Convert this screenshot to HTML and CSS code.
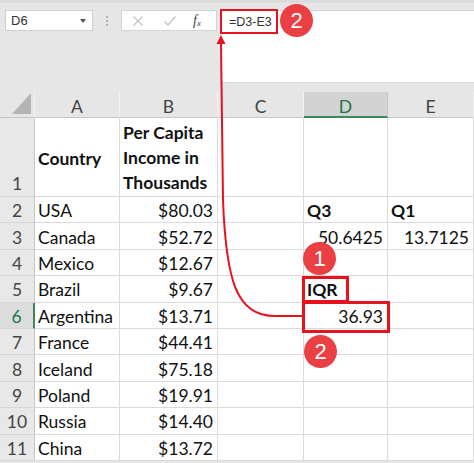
FILE: index.html
```html
<!DOCTYPE html>
<html>
<head>
<meta charset="utf-8">
<link rel="stylesheet" href="styles.css">
</head>
<body>
<div class="app">
  <div class="toolbar">
    <div class="namebox"><span class="ref">D6</span><span class="caret"></span></div>
    <div class="dots"><i></i><i></i><i></i></div>
    <div class="fbtns">
      <svg class="ico" width="12" height="12" viewBox="0 0 12 12"><path d="M1.5 1.5 L10.5 10.5 M10.5 1.5 L1.5 10.5" stroke="#c4c4c4" stroke-width="1.3" fill="none"/></svg>
      <svg class="ico" width="14" height="12" viewBox="0 0 14 12"><path d="M1.5 6.5 L5 10 L12.5 1.5" stroke="#c4c4c4" stroke-width="1.3" fill="none"/></svg>
      <span class="fx">f<sub>x</sub></span>
    </div>
    <div class="formula"><span class="ftext">=D3-E3</span></div>
  </div>

  <div class="sheet">
    <div class="corner"><span class="tri"></span></div>
    <div class="ch">A</div><div class="ch">B</div><div class="ch">C</div><div class="ch sel">D</div><div class="ch">E</div>

    <div class="rh bottom">1</div>
    <div class="c b mid">Country</div>
    <div class="c b wrap">Per Capita Income in Thousands</div>
    <div class="c"></div><div class="c"></div><div class="c"></div>

    <div class="rh">2</div><div class="c">USA</div><div class="c r">$80.03</div><div class="c"></div><div class="c b">Q3</div><div class="c b">Q1</div>
    <div class="rh">3</div><div class="c">Canada</div><div class="c r">$52.72</div><div class="c"></div><div class="c r">50.6425</div><div class="c r">13.7125</div>
    <div class="rh">4</div><div class="c">Mexico</div><div class="c r">$12.67</div><div class="c"></div><div class="c"></div><div class="c"></div>
    <div class="rh">5</div><div class="c">Brazil</div><div class="c r">$9.67</div><div class="c"></div><div class="c b">IQR</div><div class="c"></div>
    <div class="rh rsel">6</div><div class="c">Argentina</div><div class="c r">$13.71</div><div class="c"></div><div class="c r">36.93</div><div class="c"></div>
    <div class="rh">7</div><div class="c">France</div><div class="c r">$44.41</div><div class="c"></div><div class="c"></div><div class="c"></div>
    <div class="rh">8</div><div class="c">Iceland</div><div class="c r">$75.18</div><div class="c"></div><div class="c"></div><div class="c"></div>
    <div class="rh">9</div><div class="c">Poland</div><div class="c r">$19.91</div><div class="c"></div><div class="c"></div><div class="c"></div>
    <div class="rh">10</div><div class="c">Russia</div><div class="c r">$14.40</div><div class="c"></div><div class="c"></div><div class="c"></div>
    <div class="rh">11</div><div class="c">China</div><div class="c r">$13.72</div><div class="c"></div><div class="c"></div><div class="c"></div>
  </div>

  <svg class="arrow" width="474" height="463" viewBox="0 0 474 463">
    <path d="M302 316 L275 316 C236 316 226 280 223 200 L221 43" stroke="#e8121c" stroke-width="2" fill="none"/>
    <polygon points="221,35 216.5,44 225.5,44" fill="#e8121c"/>
  </svg>
  <div class="hl hl-formula"></div>
  <div class="hl hl-iqr"></div>
  <div class="hl hl-d6"></div>
  <div class="badge badge-top">2</div>
  <div class="badge badge-one">1</div>
  <div class="badge badge-two">2</div>
</div>
</body>
</html>
```
FILE: styles.css
```css
html, body {
  margin: 0;
  padding: 0;
  background: #e6e6e6;
}
.app {
  position: relative;
  width: 474px;
  height: 463px;
  overflow: hidden;
  font-family: "Lato", "Open Sans", sans-serif;
  background: #e6e6e6;
}
.toolbar {
  display: flex;
  align-items: flex-start;
  height: 92px;
  padding: 7px 0 0 5px;
  box-sizing: border-box;
  border-top: 3px solid #dcdcdc;
}
.namebox {
  width: 88px;
  height: 21px;
  box-sizing: border-box;
  background: #fff;
  border: 1px solid #cfcfcf;
  display: flex;
  align-items: center;
  justify-content: space-between;
  padding: 0 5px 0 5px;
}
.ref {
  font-family: "Liberation Sans", sans-serif;
  font-size: 13px;
  color: #333;
}
.caret {
  width: 0;
  height: 0;
  border-left: 3.5px solid transparent;
  border-right: 3.5px solid transparent;
  border-top: 4px solid #555;
  margin-right: 1px;
}
.dots {
  width: 28px;
  height: 21px;
  display: flex;
  flex-direction: column;
  align-items: center;
  justify-content: center;
  gap: 2px;
}
.dots i {
  display: block;
  width: 2px;
  height: 2px;
  background: #b0b0b0;
}
.fbtns {
  width: 96px;
  height: 21px;
  box-sizing: border-box;
  background: #fff;
  border: 1px solid #d4d4d4;
  display: flex;
  align-items: center;
  padding-left: 10px;
}
.fbtns .ico {
  display: block;
}
.fbtns .ico:first-child {
  margin-right: 19px;
}
.fbtns .ico:nth-child(2) {
  margin-right: 16px;
}
.fx {
  font-family: "Liberation Serif", serif;
  font-style: italic;
  font-size: 14px;
  color: #444;
  line-height: 1;
}
.fx sub {
  font-size: 9px;
  vertical-align: -1px;
}
.formula {
  flex: 1;
  margin-left: 3px;
  height: 73px;
  background: #fff;
  border: 1px solid #d6d6d6;
  border-right: none;
  box-sizing: border-box;
  padding: 4px 0 0 8px;
}
.ftext {
  display: block;
  font-family: "Liberation Sans", sans-serif;
  font-size: 12.5px;
  line-height: 14px;
  color: #333;
}

/* sheet */
.sheet {
  display: grid;
  grid-template-columns: 35px 85px 98px 86px 84px 86px;
  grid-template-rows: 26px 79px repeat(10, 26.4px);
  font-size: 17.5px;
  color: #111;
}
.corner {
  position: relative;
  border-right: 1px solid #f2f2f2;
  border-bottom: 1px solid #c6c6c6;
  box-sizing: border-box;
}
.tri {
  position: absolute;
  right: 3px;
  bottom: 3px;
  width: 0;
  height: 0;
  border-left: 19px solid transparent;
  border-bottom: 21px solid #b4b4b4;
}
.ch {
  display: flex;
  align-items: center;
  justify-content: center;
  padding-top: 4px;
  box-sizing: border-box;
  color: #444;
  border-right: 1px solid #f2f2f2;
  border-bottom: 1px solid #c6c6c6;
}
.ch.sel {
  background: #d3d3d3;
  color: #217346;
  border-bottom: 2px solid #3b8a5c;
  border-right-color: #c8c8c8;
}
.rh {
  display: flex;
  align-items: center;
  justify-content: center;
  padding-top: 2px;
  box-sizing: border-box;
  color: #444;
  background: #e8e8e8;
  border-right: 1px solid #c6c6c6;
  border-bottom: 1px solid #d6d6d6;
}
.rh.bottom {
  align-items: flex-end;
  padding-bottom: 2px;
}
.rh.rsel {
  background: #dcdcdc;
  color: #217346;
  border-right: 2px solid #3b8a5c;
}
.c {
  background: #fff;
  display: flex;
  align-items: center;
  padding: 2px 4px 0 3px;
  box-sizing: border-box;
  border-right: 1px solid #dadada;
  border-bottom: 1px solid #dadada;
  white-space: nowrap;
}
.c.r {
  justify-content: flex-end;
}
.c.b {
  font-weight: 700;
}
.c.wrap {
  white-space: normal;
  line-height: 25px;
  padding-top: 1px;
}

/* overlays */
.arrow {
  position: absolute;
  left: 0;
  top: 0;
  pointer-events: none;
}
.hl {
  position: absolute;
  border: 2px solid #e8121c;
  box-sizing: border-box;
}
.hl-formula {
  left: 220px;
  top: 9px;
  width: 58px;
  height: 25px;
}
.hl-iqr {
  left: 302px;
  top: 276px;
  width: 47px;
  height: 27px;
  border-width: 3px;
}
.hl-d6 {
  left: 302px;
  top: 301px;
  width: 88px;
  height: 32px;
  border-width: 3px;
}
.badge {
  position: absolute;
  width: 33px;
  height: 33px;
  border-radius: 50%;
  background: #ea3f43;
  color: #fff;
  font-family: "Liberation Sans", sans-serif;
  font-size: 22px;
  display: flex;
  align-items: center;
  justify-content: center;
}
.badge-top {
  left: 280px;
  top: 4px;
}
.badge-one {
  left: 303px;
  top: 242px;
}
.badge-two {
  left: 304px;
  top: 335px;
}
```
